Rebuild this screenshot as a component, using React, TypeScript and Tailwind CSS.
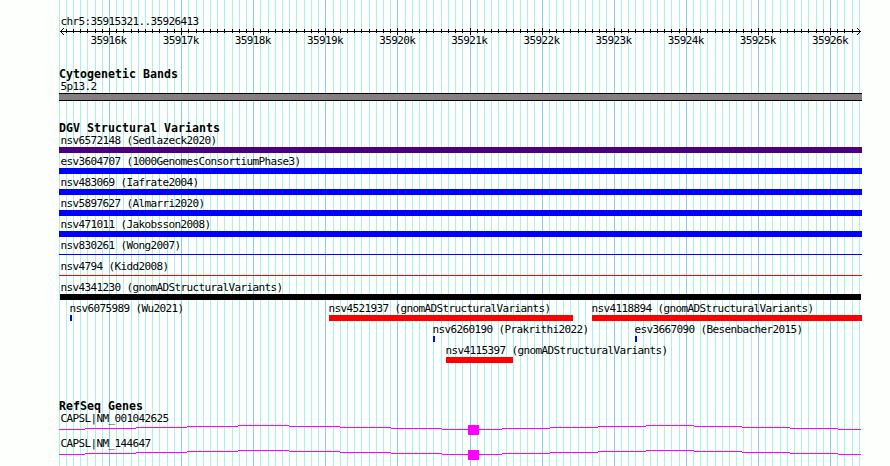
type Variant = {
  name: string;
  start: number;
  end: number;
  bar: string;
};

const LEFT = 59;

const axisLabels = [
  "35916k",
  "35917k",
  "35918k",
  "35919k",
  "35920k",
  "35921k",
  "35922k",
  "35923k",
  "35924k",
  "35925k",
  "35926k",
];

const ticks = Array.from({ length: 112 }, (_, i) => ({
  x: Math.round(50 + (i - 7) * 7.21),
  major: (i - 7) % 10 === 0,
})).filter((tick) => tick.x < 802);

const variantRows: Variant[][] = [
  [{ name: "nsv6572148 (Sedlazeck2020)", start: 59, end: 862, bar: "h-1.5 bg-[#4b0082]" }],
  [{ name: "esv3604707 (1000GenomesConsortiumPhase3)", start: 59, end: 862, bar: "h-1.5 bg-[#0000ff]" }],
  [{ name: "nsv483069 (Iafrate2004)", start: 59, end: 862, bar: "h-1.5 bg-[#0000ff]" }],
  [{ name: "nsv5897627 (Almarri2020)", start: 59, end: 862, bar: "h-1.5 bg-[#0000ff]" }],
  [{ name: "nsv471011 (Jakobsson2008)", start: 59, end: 862, bar: "h-1.5 bg-[#0000ff]" }],
  [{ name: "nsv830261 (Wong2007)", start: 59, end: 862, bar: "mt-0.5 h-px bg-[#0000ff]" }],
  [{ name: "nsv4794 (Kidd2008)", start: 59, end: 862, bar: "mt-0.5 h-px bg-[#ff0000]" }],
  [{ name: "nsv4341230 (gnomADStructuralVariants)", start: 60, end: 861, bar: "h-1.5 bg-black" }],
  [
    { name: "nsv6075989 (Wu2021)", start: 70, end: 72, bar: "h-1.5 bg-[#0000ff]" },
    { name: "nsv4521937 (gnomADStructuralVariants)", start: 329, end: 573, bar: "h-1.5 bg-[#ff0000]" },
    { name: "nsv4118894 (gnomADStructuralVariants)", start: 592, end: 862, bar: "h-1.5 bg-[#ff0000]" },
  ],
  [
    { name: "nsv6260190 (Prakrithi2022)", start: 433, end: 435, bar: "h-1.5 bg-[#0000ff]" },
    { name: "esv3667090 (Besenbacher2015)", start: 635, end: 637, bar: "h-1.5 bg-[#0000ff]" },
  ],
  [{ name: "nsv4115397 (gnomADStructuralVariants)", start: 446, end: 513, bar: "h-1.5 bg-[#ff0000]" }],
];

// horizontal runs of the intron line: x, width, y
const intronRuns = [
  [0, 26, 4],
  [26, 51, 3],
  [77, 51, 2],
  [128, 51, 1],
  [179, 51, 0],
  [230, 51, 1],
  [281, 51, 2],
  [332, 51, 3],
  [383, 60, 4],
  [443, 48, 3],
  [491, 48, 2],
  [539, 48, 1],
  [587, 48, 0],
  [635, 48, 1],
  [683, 48, 2],
  [731, 48, 3],
  [779, 23, 4],
];

const Gridlines = () => (
  <svg
    className="absolute top-0 left-[59px] h-[466px] w-[803px]"
    shapeRendering="crispEdges"
  >
    {ticks.map(({ x, major }) => (
      <rect
        key={x}
        x={x}
        y={0}
        width={1}
        height={466}
        fill={major ? "#87ceeb" : "#afeeee"}
      />
    ))}
  </svg>
);

const Label = ({ children }: { children: string }) => (
  <div className="h-[13px] pl-[1.4px] text-[11px] leading-[13px] tracking-[-0.622px] whitespace-pre">
    {children}
  </div>
);

const Heading = ({ children }: { children: string }) => (
  <h2 className="h-[13px] text-[11.6px] leading-[13px] font-bold tracking-[0.016px] whitespace-pre">
    {children}
  </h2>
);

const Axis = () => (
  <div>
    <svg
      className="block h-[7px] w-[803px]"
      shapeRendering="crispEdges"
      fill="black"
    >
      <rect x={1} y={3} width={801} height={1} />
      {ticks.slice(1, -1).map(({ x, major }) => (
        <rect
          key={x}
          x={x}
          y={major ? 0 : 1}
          width={1}
          height={major ? 7 : 4}
        />
      ))}
      {[1, 2, 3].map((d) => (
        <g key={d}>
          <rect x={1 + d} y={3 - d} width={1} height={1} />
          <rect x={1 + d} y={3 + d} width={1} height={1} />
          <rect x={801 - d} y={3 - d} width={1} height={1} />
          <rect x={801 - d} y={3 + d} width={1} height={1} />
        </g>
      ))}
    </svg>
    <div className="-mt-px flex pl-[13.5px]">
      {axisLabels.map((label) => (
        <div
          key={label}
          className="h-[13px] w-[72.15px] shrink-0 text-center text-[11px] leading-[13px] tracking-[-0.622px]"
        >
          {label}
        </div>
      ))}
    </div>
  </div>
);

const VariantRow = ({ variants }: { variants: Variant[] }) => (
  <div className="grid h-[21px]">
    {variants.map(({ name, start, end, bar }) => (
      <div
        key={name}
        className="col-start-1 row-start-1"
        style={{ marginLeft: start - LEFT }}
      >
        <div className={start > 60 ? "-ml-0.5" : start === 60 ? "-ml-px" : ""}>
          <Label>{name}</Label>
        </div>
        <div className={bar} style={{ width: end - start }} />
      </div>
    ))}
  </div>
);

const Gene = ({ name }: { name: string }) => (
  <div className="h-[25px]">
    <Label>{name}</Label>
    <svg
      className="block h-2.5 w-[803px]"
      shapeRendering="crispEdges"
      fill="#ff00ff"
    >
      {intronRuns.map(([x, width, y]) => (
        <rect key={x} x={x} y={y} width={width} height={1} />
      ))}
      <rect x={409} y={0} width={11} height={10} />
    </svg>
  </div>
);

const App = () => {
  return (
    <div className="relative h-[466px] w-[890px] overflow-hidden bg-[#fdfffc] font-['DejaVu_Sans_Mono',monospace] text-black">
      <Gridlines />
      <main className="relative ml-[59px] w-[803px] pt-[15px]">
        <Label>chr5:35915321..35926413</Label>
        <Axis />
        <section className="mt-[21px]">
          <Heading>Cytogenetic Bands</Heading>
          <div className="-mt-px">
            <Label>5p13.2</Label>
          </div>
          <div className="h-2 border-y border-black bg-[#848082]" />
        </section>
        <section className="mt-[21px]">
          <Heading>DGV Structural Variants</Heading>
          <div className="-mt-px">
            {variantRows.map((variants) => (
              <VariantRow key={variants[0].name} variants={variants} />
            ))}
          </div>
        </section>
        <section className="mt-[35px]">
          <Heading>RefSeq Genes</Heading>
          <div className="-mt-px">
            <Gene name="CAPSL|NM_001042625" />
            <Gene name="CAPSL|NM_144647" />
          </div>
        </section>
      </main>
    </div>
  );
};

export default App;
